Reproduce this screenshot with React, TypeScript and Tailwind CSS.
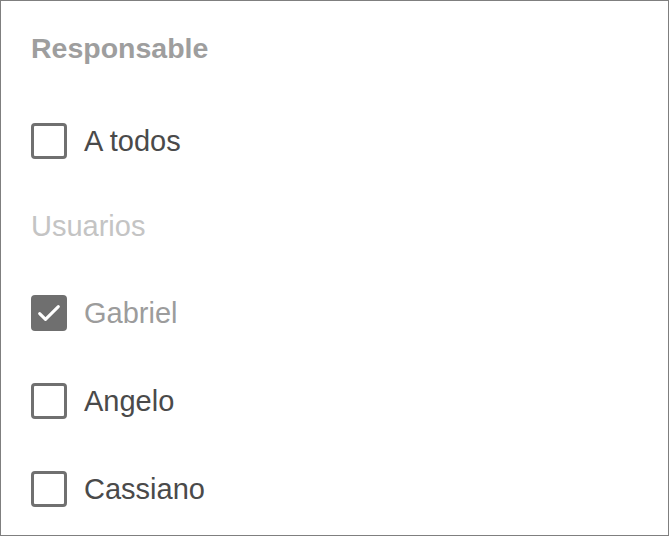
import React, { useState } from 'react';

const users = [
  { name: 'Gabriel', checked: true },
  { name: 'Angelo', checked: false },
  { name: 'Cassiano', checked: false },
];

function Box({ checked }: { checked: boolean }) {
  if (checked) {
    return (
      <span className="flex items-center justify-center w-[36px] h-[36px] rounded-[4px] bg-[#6f6f6f]">
        <svg width="28" height="28" viewBox="0 0 24 24" fill="none">
          <path d="M4 12.5l5 5L20 6.5" stroke="#fff" strokeWidth="2.6" strokeLinecap="round" strokeLinejoin="round" />
        </svg>
      </span>
    );
  }
  return <span className="block w-[36px] h-[36px] rounded-[4px] border-[3px] border-[#707070] bg-white" />;
}

function Row({ label, checked, muted }: { label: string; checked: boolean; muted?: boolean }) {
  return (
    <label className="flex items-center h-[36px] gap-[17px]">
      <Box checked={checked} />
      <span className={muted ? 'text-[29px] text-[#9c9c9c] pt-[2px]' : 'text-[29px] text-[#4a4a4a] pt-[2px]'}>{label}</span>
    </label>
  );
}

export default function App() {
  const [all] = useState(false);

  return (
    <div className="w-[669px] h-[536px] border border-[#7f7f7f] bg-white font-['Liberation_Sans',Arial,sans-serif]">
      <div className="flex flex-col pl-[30px] pt-[29px]">
        <h2 className="h-[36px] flex items-center text-[28.5px] font-bold text-[#9e9e9e]">Responsable</h2>
        <div className="mt-[57px]">
          <Row label="A todos" checked={all} />
        </div>
        <p className="mt-[49px] h-[36px] flex items-center text-[29px] text-[#c4c4c4] pt-[2px]">Usuarios</p>
        <div className="flex flex-col gap-[52px] mt-[51px]">
          {users.map((u) => (
            <Row key={u.name} label={u.name} checked={u.checked} muted={u.checked} />
          ))}
        </div>
      </div>
    </div>
  );
}
